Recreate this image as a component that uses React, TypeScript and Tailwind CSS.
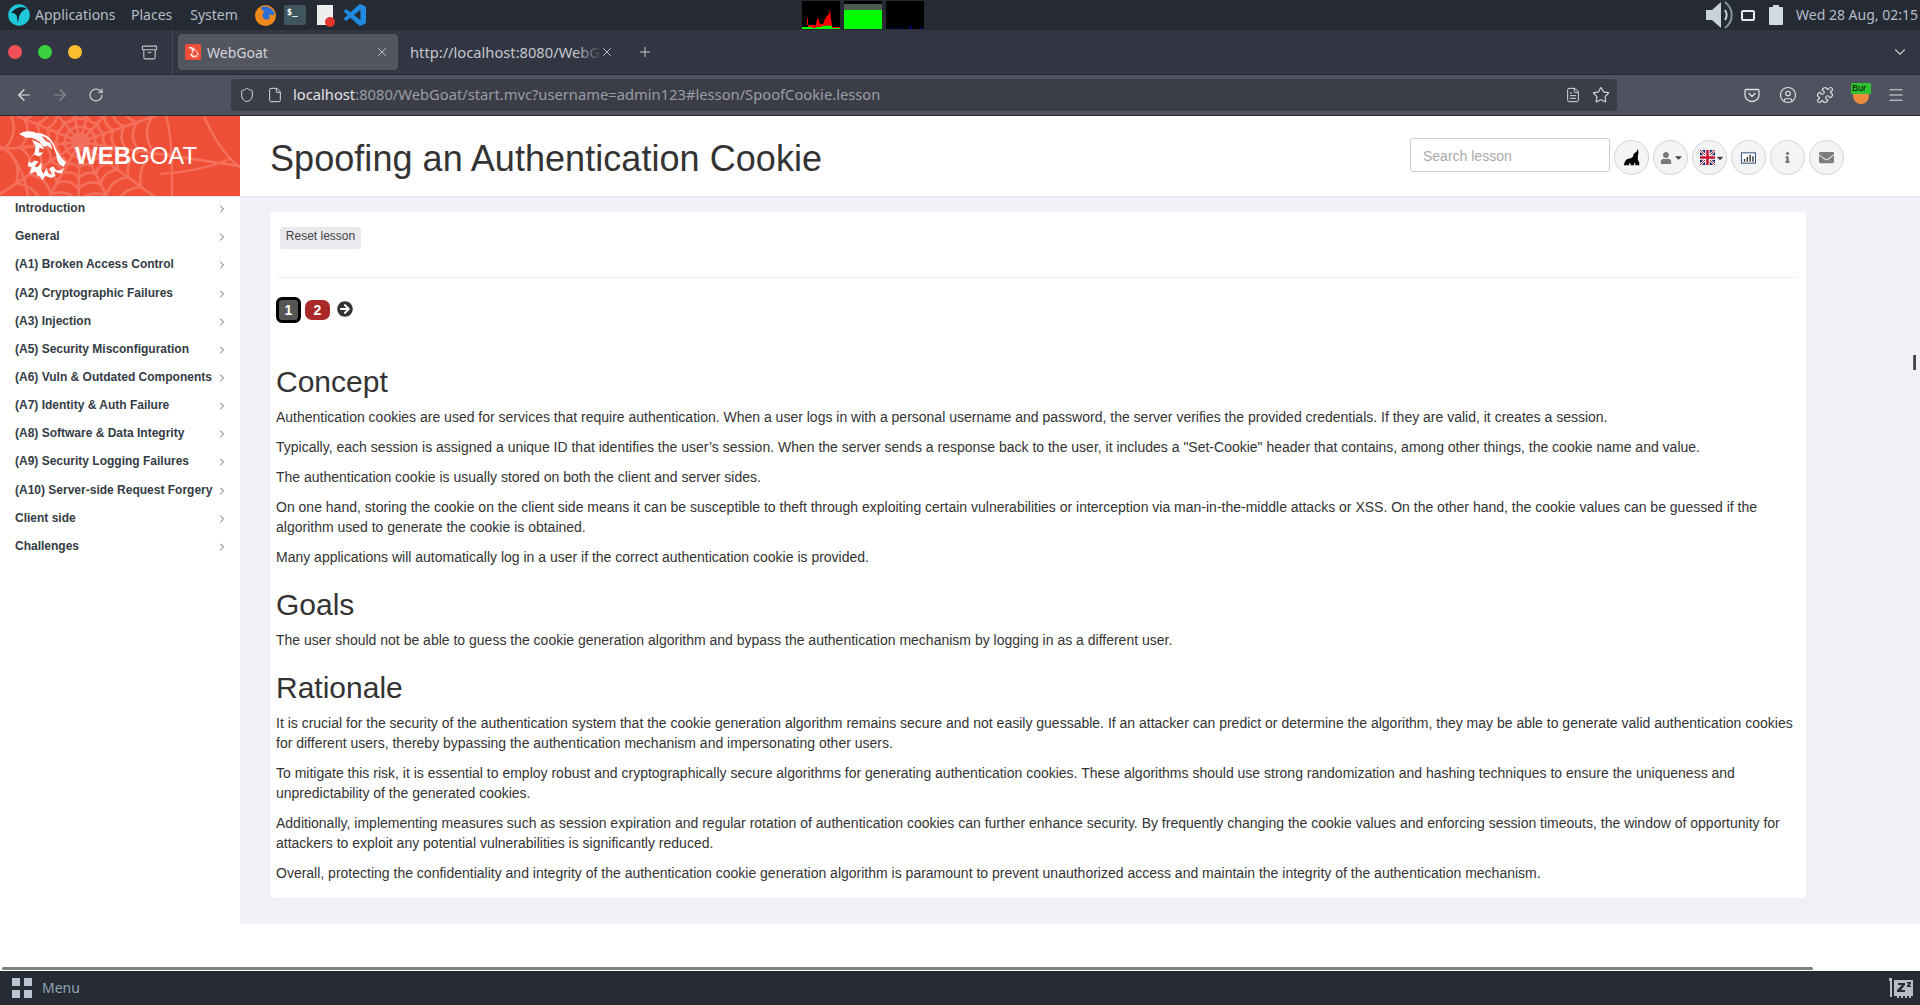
import React from "react";
import { ArrowLeft, ArrowRight, RotateCw, Shield, File, FileText, Star, CircleUser, Puzzle, Menu, X, Plus, ChevronDown, ChevronRight, Archive } from "lucide-react";
import { FaUser, FaCaretDown, FaInfo, FaEnvelope, FaArrowCircleRight } from "react-icons/fa";

const lessons = [
  "Introduction", "General", "(A1) Broken Access Control", "(A2) Cryptographic Failures", "(A3) Injection",
  "(A5) Security Misconfiguration", "(A6) Vuln & Outdated Components", "(A7) Identity & Auth Failure",
  "(A8) Software & Data Integrity", "(A9) Security Logging Failures", "(A10) Server-side Request Forgery",
  "Client side", "Challenges",
];

function Web() {
  const cx = 80, cy = 26;
  const spokes = 13;
  const rings = [9, 17, 26, 36, 47, 60, 76];
  const pts = Array.from({ length: spokes }, (_, i) => (i / spokes) * Math.PI * 2 + 0.15);
  const d: string[] = [];
  pts.forEach((a) => d.push(`M${cx} ${cy}L${cx + Math.cos(a) * 260} ${cy + Math.sin(a) * 260}`));
  rings.forEach((r) => {
    pts.forEach((a, i) => {
      const b = pts[(i + 1) % spokes];
      const mid = (a + (i === spokes - 1 ? b + Math.PI * 2 : b)) / 2;
      d.push(`M${cx + Math.cos(a) * r} ${cy + Math.sin(a) * r}Q${cx + Math.cos(mid) * r * 0.8} ${cy + Math.sin(mid) * r * 0.8} ${cx + Math.cos(b) * r} ${cy + Math.sin(b) * r}`);
    });
  });
  return (
    <svg viewBox="0 0 240 80" className="absolute inset-0 w-full h-full" fill="none">
      <path d={d.join("")} stroke="#f5705c" strokeWidth="2.6" />
      <path d="M166 0C172 22 172 42 172 80M204 0C212 20 224 38 240 52M0 30C14 36 24 56 28 80M160 58C190 56 214 50 232 42" stroke="#f5705c" strokeWidth="2.4" />
    </svg>
  );
}

const goatHorn = "M1 3 C8 -1 14 0 19 2 C27 2 33 6 37 14 C38 18 41 21 44 27 L49 32 L47 36 C46 38 45 34 43 35 L40 30 L39 24 L35 13 C31 8 28 6 24 5 L29 11 L33 12 L35 19 L30 15 L26 16 L21 10 L14 7 L8 7 Z";
const goatFace = "M14 9 L23 13 L27 19 L22 17 L21 22 L26 22 L22 26 L16 24 L11 30 L13 33 L17 30 L21 31 L17 36 L20 37 L24 32 L24 40 L26 44 L29 38 L31 43 L35 45 L32 38 L36 36 L39 40 L44 40 L47 37 L45 43 L41 43 L37 41 L38 46 L34 48 L28 46 L25 50 L22 46 L20 46 L18 41 L12 44 L14 37 L10 36 L11 30 L17 22 L18 16 Z";

function Goat({ className }: { className: string }) {
  return (
    <svg viewBox="0 0 50 50" className={className} fill="#fff">
      <path d={goatHorn} />
      <path d={goatFace} fillRule="evenodd" />
    </svg>
  );
}

function Wolf() {
  return (
    <svg viewBox="0 0 24 24" className="w-[17px] h-[17px]" fill="#000">
      <path d="M21 0 L19 4 L15 7 L14 11 L11 13 L6 14 L3 17 L1 23 L23 23 L23 19 L21 15 L21 9 L22 5 Z" />
      <path d="M8 23 L9.5 19 L11.5 23 Z M15 23 L16.5 19 L18 23 Z" fill="#f4f4f4" />
    </svg>
  );
}

function Flag() {
  return (
    <svg viewBox="0 0 60 60" className="w-[15px] h-[15px] shrink-0" preserveAspectRatio="none">
      <rect width="60" height="60" fill="#1a2a6c" />
      <path d="M0 0L60 60M60 0L0 60" stroke="#fff" strokeWidth="10" />
      <path d="M0 0L60 60M60 0L0 60" stroke="#c8102e" strokeWidth="4" />
      <path d="M30 0V60M0 30H60" stroke="#fff" strokeWidth="18" />
      <path d="M30 0V60M0 30H60" stroke="#c8102e" strokeWidth="10" />
    </svg>
  );
}

function Round({ children }: { children: React.ReactNode }) {
  return (
    <div className="w-[35px] h-[35px] rounded-full bg-[#f4f4f4] border border-[#d4d4d4] flex items-center justify-center shrink-0">
      {children}
    </div>
  );
}

function TopPanel() {
  return (
    <div className="h-[30px] shrink-0 bg-[#262a33] flex items-center text-[14px] text-[#b5bdc8] font-['Noto_Sans',sans-serif] relative">
      <div className="flex items-center w-[802px] shrink-0">
        <svg viewBox="0 0 20 20" className="w-[22px] h-[22px] ml-[8px] mr-[5px] shrink-0">
          <circle cx="10" cy="10" r="9.8" fill="#1ec8d8" />
          <path d="M3 8 C7 3 12 2 17 4 C13 6 11 8 10 12 L9 17 L8 11 C7 9 5 8 3 8Z" fill="#12202a" />
        </svg>
        <span className="w-[80px] shrink-0 -mt-[2px]">Applications</span>
        <span className="ml-[16px] shrink-0 -mt-[2px]">Places</span>
        <span className="ml-[18px] shrink-0 -mt-[2px]">System</span>
        <svg viewBox="0 0 20 20" className="w-[23px] h-[22px] ml-[16px] shrink-0">
          <circle cx="10" cy="10.5" r="9.5" fill="#f08a1d" />
          <path d="M6 3 C10 1 16 3 18 8 C18 12 15 9 13 10 C15 12 13 15 10 14 C7 13 6 9 9 7 C7 6 6 5 6 3Z" fill="#2a6fd6" />
        </svg>
        <span className="w-[22px] h-[20px] ml-[7px] shrink-0 rounded-[2px] bg-[#3f5661] text-[9px] leading-[14px] pl-[3px] font-bold text-white font-['DejaVu_Sans_Mono',monospace]">$_</span>
        <span className="relative w-[16px] h-[20px] ml-[11px] shrink-0 bg-[#eeeeee]">
          <span className="absolute -right-[2px] bottom-[-2px] w-[10px] h-[10px] rounded-full bg-[#e0362c]" />
        </span>
        <svg viewBox="0 0 24 24" className="w-[22px] h-[22px] ml-[11px] shrink-0" preserveAspectRatio="none">
          <path fill="#1f8ae0" d="M23.15 2.587L18.21.21a1.494 1.494 0 0 0-1.705.29l-9.46 8.63-4.12-3.128a.999.999 0 0 0-1.276.057L.327 7.261A1 1 0 0 0 .326 8.74L3.899 12 .326 15.26a1 1 0 0 0 .001 1.479L1.65 17.94a.999.999 0 0 0 1.276.057l4.12-3.128 9.46 8.63a1.492 1.492 0 0 0 1.704.29l4.942-2.377A1.5 1.5 0 0 0 24 20.06V3.939a1.5 1.5 0 0 0-.85-1.352zm-5.146 14.861L10.826 12l7.178-5.448v10.896z" />
        </svg>
      </div>
      <div className="flex gap-[4px] items-center h-[28px] shrink-0">
        <svg viewBox="0 0 38 28" className="w-[38px] h-[28px] bg-black shrink-0">
          <path d="M0 28V26H13V24H5V17H6V26H13L14 24L15 18L16 17L17 20L18 23H21L23 18L25 15L27 13L28 8L29 18L30 24V26H38V28Z" fill="#f00" />
          <path d="M0 28V26H10V27H14V26H20V25H24L25 24L27 25H30V27H38V28Z" fill="#0f0" />
        </svg>
        <div className="w-[38px] h-[28px] flex flex-col bg-black shrink-0">
          <div className="h-[3px] bg-black" />
          <div className="h-[6px] bg-[#4a5d50]" />
          <div className="flex-1 bg-[#00ff00]" />
        </div>
        <svg viewBox="0 0 38 28" className="w-[38px] h-[28px] bg-black shrink-0">
          <path d="M5 28V27H6V28ZM15 28V27H16V28ZM24 28V25H25V28ZM34 28V27H35V28Z" fill="#00f" />
        </svg>
      </div>
      <div className="ml-auto flex items-center shrink-0">
        <svg viewBox="0 0 29 28" className="w-[29px] h-[28px] shrink-0">
          <path d="M0 9H6L15 1V27L6 19H0Z" fill="#c8d2d8" />
          <path d="M19 9C21 12 21 16 19 19" stroke="#c8d2d8" strokeWidth="2" fill="none" />
          <path d="M19 1C28 8 28 20 19 27" stroke="#84969e" strokeWidth="2" fill="none" />
        </svg>
        <span className="w-[14px] h-[11px] ml-[6px] border-2 border-[#e6eaee] rounded-[2px] shrink-0" />
        <span className="relative w-[14px] h-[18px] ml-[14px] bg-[#d3dbe0] rounded-[1px] mt-[1px] shrink-0">
          <span className="absolute -top-[2px] left-[4px] w-[6px] h-[2px] bg-[#d3dbe0]" />
        </span>
        <span className="w-[137px] pl-[13px] shrink-0 whitespace-nowrap -mt-[2px]">Wed 28 Aug, 02:15</span>
      </div>
    </div>
  );
}

function TabBar() {
  return (
    <div className="h-[45px] shrink-0 bg-[#323642] border-b border-[#24272f] flex items-center text-[14px] text-[#d4d6dc] font-['Noto_Sans',sans-serif]">
      <div className="flex gap-[16px] ml-[8px] shrink-0">
        <span className="w-[14px] h-[14px] rounded-full bg-[#f25056]" />
        <span className="w-[14px] h-[14px] rounded-full bg-[#39d13f]" />
        <span className="w-[14px] h-[14px] rounded-full bg-[#fcbe2f]" />
      </div>
      <Archive className="w-[17px] h-[17px] ml-[59px] shrink-0 text-[#c5c7cd]" strokeWidth={1.5} />
      <div className="w-px h-[45px] bg-[#4b4e5a] ml-[14px] shrink-0" />
      <div className="w-[220px] h-[36px] ml-[5px] shrink-0 rounded-[4px] bg-[#53555f] flex items-center pl-[7px]">
        <span className="w-[16px] h-[16px] bg-[#ef4f37] rounded-[1px] mr-[6px] shrink-0 flex items-center justify-center">
          <Goat className="w-[11px] h-[11px]" />
        </span>
        <span>WebGoat</span>
        <X className="ml-auto w-[14px] h-[14px] mr-[9px] text-[#cfd1d7]" strokeWidth={1.5} />
      </div>
      <div className="relative w-[204px] ml-[12px] shrink-0 flex items-center">
        <span className="whitespace-nowrap text-[14.7px] text-[#c5c7ce]">http://localhost:8080/WebG</span>
        <span className="absolute left-[166px] w-[26px] h-[24px] bg-gradient-to-r from-transparent to-[#323642]" />
        <X className="absolute left-[190px] w-[14px] h-[14px] text-[#cfd1d7]" strokeWidth={1.5} />
      </div>
      <Plus className="w-[16px] h-[16px] ml-[23px] shrink-0 text-[#c5c7ce]" strokeWidth={1.5} />
      <ChevronDown className="ml-auto mr-[11px] w-[18px] h-[18px] shrink-0 text-[#c5c7ce]" strokeWidth={1.5} />
    </div>
  );
}

function NavBar() {
  return (
    <div className="h-[41px] shrink-0 bg-[#50535f] border-b border-[#24272f] flex items-center pb-px font-['Noto_Sans',sans-serif]">
      <ArrowLeft className="w-[18px] h-[18px] ml-[15px] shrink-0 text-[#e2e3e7]" strokeWidth={1.6} />
      <ArrowRight className="w-[18px] h-[18px] ml-[18px] shrink-0 text-[#8c8e97]" strokeWidth={1.6} />
      <RotateCw className="w-[16px] h-[16px] ml-[19px] shrink-0 text-[#dcdde1]" strokeWidth={1.6} />
      <div className="w-[1386px] h-[32px] ml-[127px] shrink-0 rounded-[4px] bg-[#3b3d47] flex items-center">
        <Shield className="w-[16px] h-[16px] ml-[8px] shrink-0 text-[#d8d9dd]" strokeWidth={1.5} />
        <File className="w-[16px] h-[16px] ml-[12px] shrink-0 text-[#d8d9dd]" strokeWidth={1.5} />
        <span className="ml-[10px] whitespace-nowrap text-[14.72px] text-[#9b9da5]"><span className="text-[#e4e5e9]">localhost</span>:8080/WebGoat/start.mvc?username=admin123#lesson/SpoofCookie.lesson</span>
        <FileText className="ml-auto w-[16px] h-[16px] shrink-0 text-[#d8d9dd]" strokeWidth={1.5} />
        <Star className="w-[18px] h-[18px] ml-[11px] mr-[7px] shrink-0 text-[#d8d9dd]" strokeWidth={1.5} />
      </div>
      <svg viewBox="0 0 16 16" className="w-[16px] h-[16px] ml-[127px] shrink-0" fill="none" stroke="#dcdde1" strokeWidth="1.3">
        <path d="M2 2.5H14A1 1 0 0 1 15 3.5V8A7 6.5 0 0 1 1 8V3.5A1 1 0 0 1 2 2.5Z" />
        <path d="M5 6.5L8 9.5L11 6.5" strokeLinecap="round" />
      </svg>
      <CircleUser className="w-[18px] h-[18px] ml-[19px] shrink-0 text-[#dcdde1]" strokeWidth={1.6} />
      <Puzzle className="w-[18px] h-[18px] ml-[19px] shrink-0 text-[#dcdde1]" strokeWidth={1.6} />
      <span className="relative w-[16px] h-[16px] ml-[19px] shrink-0 rounded-full bg-[#ec8a3c] mt-[3px]">
        <span className="absolute -top-[5px] -left-[2px] w-[20px] h-[11px] bg-[#2fc42f] rounded-[1px] text-[9px] leading-[11px] pl-px text-black overflow-hidden font-['Liberation_Sans',sans-serif]">Bur</span>
      </span>
      <Menu className="w-[18px] h-[18px] ml-[18px] shrink-0 text-[#dcdde1]" strokeWidth={1.6} />
    </div>
  );
}

function Sidebar() {
  return (
    <aside className="w-[240px] shrink-0 bg-white pt-[0.04px]">
      {lessons.map((l) => (
        <div key={l} className="h-[28.156px] pl-[15px] pr-[12px] pb-[6px] flex items-center justify-between whitespace-nowrap text-[12px] font-bold text-[#333c44]">
          <span>{l}</span>
          <ChevronRight className="w-[12px] h-[12px] mt-[2px] shrink-0 text-[#555]" strokeWidth={1.8} />
        </div>
      ))}
    </aside>
  );
}

function HeaderBar() {
  return (
    <div className="h-[81px] shrink-0 flex border-b border-[#e7e8ee]">
      <div className="w-[240px] h-[80px] shrink-0 bg-[#ef4f37] relative overflow-hidden">
        <Web />
        <Goat className="absolute left-[18px] top-[15px] w-[49px] h-[49px]" />
        <span className="absolute left-[75px] top-[26px] text-[24px] leading-[28px] text-white"><b>WEB</b>GOAT</span>
      </div>
      <h1 className="ml-[30px] text-[36px] leading-[40px] mt-[23px] text-[#333] tracking-[0.05px] whitespace-nowrap">Spoofing an Authentication Cookie</h1>
      <div className="ml-auto mr-[76px] flex items-start pt-[24px] gap-[4px]">
        <div className="w-[200px] h-[34px] border border-[#ccc] rounded-[3px] pl-[12px] pt-[2px] flex items-center text-[14px] text-[#aaa] -mt-[2px]">Search lesson</div>
        <Round><Wolf /></Round>
        <Round>
          <span className="flex items-center text-[#777] ml-[2px]"><FaUser className="w-[12px] h-[12px]" /><FaCaretDown className="w-[11px] h-[11px] ml-[1px] -mr-[1px] text-[#444]" /></span>
        </Round>
        <Round>
          <span className="flex items-center -mr-[5px]"><Flag /><FaCaretDown className="w-[10px] h-[10px] text-[#444]" /></span>
        </Round>
        <Round>
          <svg viewBox="0 0 16 12" className="w-[15px] h-[12px]">
            <rect x="0.5" y="0.5" width="15" height="11" fill="#fff" stroke="#274b7a" />
            <path d="M3 10V7H4.5V10ZM6 10V5H7.5V10ZM9 10V2.5H10.5V10ZM12 10V4H13.5V10Z" fill="#333" />
          </svg>
        </Round>
        <Round><FaInfo className="w-[11px] h-[11px] text-[#777]" /></Round>
        <Round><FaEnvelope className="w-[15px] h-[15px] text-[#7d7d7d]" /></Round>
      </div>
    </div>
  );
}

function Para({ children }: { children: React.ReactNode }) {
  return <p className="mb-[10px] text-[14px] leading-[20px]">{children}</p>;
}
function H2({ children }: { children: React.ReactNode }) {
  return <h2 className="text-[30px] leading-[35px] mt-[20px] mb-[8px]">{children}</h2>;
}

function Card() {
  return (
    <main className="flex-1 bg-[#f0f1f6] pl-[30px] pr-[114px] pt-[15px]">
      <div className="h-[686px] bg-white rounded-[4px] px-[6px] pt-[11px] text-[#333]">
        <div className="h-[55px] border-b border-[#f0f1f4] rounded-b-[4px]">
          <button className="ml-[4px] h-[22px] w-[81px] pb-[3px] rounded-[3px] bg-[#e9e9ee] text-[12px] text-[#444]">Reset lesson</button>
        </div>
        <div className="flex items-start mt-[19px] h-[47px] text-[14px] font-bold text-white">
          <span className="w-[25px] h-[26px] rounded-[6px] border-[3px] border-black bg-[#555] flex items-center justify-center">1</span>
          <span className="w-[25px] h-[20px] mt-[3px] ml-[4px] rounded-[7px] bg-[#a92828] flex items-center justify-center">2</span>
          <FaArrowCircleRight className="w-[16px] h-[16px] mt-[4px] ml-[7px] text-[#333]" />
        </div>
        <H2>Concept</H2>
        <Para>Authentication cookies are used for services that require authentication. When a user logs in with a personal username and password, the server verifies the provided credentials. If they are valid, it creates a session.</Para>
        <Para>Typically, each session is assigned a unique ID that identifies the user’s session. When the server sends a response back to the user, it includes a "Set-Cookie" header that contains, among other things, the cookie name and value.</Para>
        <Para>The authentication cookie is usually stored on both the client and server sides.</Para>
        <Para>On one hand, storing the cookie on the client side means it can be susceptible to theft through exploiting certain vulnerabilities or interception via man-in-the-middle attacks or XSS. On the other hand, the cookie values can be guessed if the algorithm used to generate the cookie is obtained.</Para>
        <Para>Many applications will automatically log in a user if the correct authentication cookie is provided.</Para>
        <H2>Goals</H2>
        <Para>The user should not be able to guess the cookie generation algorithm and bypass the authentication mechanism by logging in as a different user.</Para>
        <H2>Rationale</H2>
        <Para>It is crucial for the security of the authentication system that the cookie generation algorithm remains secure and not easily guessable. If an attacker can predict or determine the algorithm, they may be able to generate valid authentication cookies for different users, thereby bypassing the authentication mechanism and impersonating other users.</Para>
        <Para>To mitigate this risk, it is essential to employ robust and cryptographically secure algorithms for generating authentication cookies. These algorithms should use strong randomization and hashing techniques to ensure the uniqueness and unpredictability of the generated cookies.</Para>
        <Para>Additionally, implementing measures such as session expiration and regular rotation of authentication cookies can further enhance security. By frequently changing the cookie values and enforcing session timeouts, the window of opportunity for attackers to exploit any potential vulnerabilities is significantly reduced.</Para>
        <Para>Overall, protecting the confidentiality and integrity of the authentication cookie generation algorithm is paramount to prevent unauthorized access and maintain the integrity of the authentication mechanism.</Para>
      </div>
    </main>
  );
}

function Taskbar() {
  return (
    <div className="h-[34px] shrink-0 bg-[#272b34] flex items-center font-['Noto_Sans',sans-serif] text-[14px] text-[#8fa3b8]">
      <div className="grid grid-cols-2 gap-[4px] ml-[12px] mr-[10px]">
        <span className="w-[8px] h-[8px] bg-[#b8c4d2]" /><span className="w-[8px] h-[8px] bg-[#b8c4d2]" />
        <span className="w-[8px] h-[8px] bg-[#b8c4d2]" /><span className="w-[8px] h-[8px] bg-[#b8c4d2]" />
      </div>
      <span className="-mt-[2px]">Menu</span>
      <svg viewBox="0 0 24 22" className="ml-auto mr-[7px] w-[24px] h-[22px]" fill="#b9bdc3">
        <path d="M0 1H3V20H1V4H0Z" />
        <path d="M5 3H24V19H22V21H20V19H18V21H16V19H14V21H12V19H10V21H8V19H5Z" />
        <path d="M9 6H16V8L12 13H16V15H8V13L13 8H9Z M18 5H22V6.5L20 8.5H22V10H18V8.5L20 6.5H18Z" fill="#272b34" />
      </svg>
    </div>
  );
}

export default function App() {
  return (
    <div className="relative w-[1920px] h-[1005px] overflow-hidden flex flex-col bg-white font-['Liberation_Sans',Arial,sans-serif]">
      <TopPanel />
      <TabBar />
      <NavBar />
      <HeaderBar />
      <div className="h-[727px] flex shrink-0">
        <Sidebar />
        <Card />
      </div>
      <div className="flex-1 flex flex-col justify-end">
        <div className="ml-[2px] w-[1811px] h-[3px] mb-px rounded-full bg-[#808080]" />
      </div>
      <Taskbar />
      <div className="absolute left-[1913px] top-[355px] w-[3px] h-[15px] bg-[#444] border-l border-white/20" />
    </div>
  );
}
